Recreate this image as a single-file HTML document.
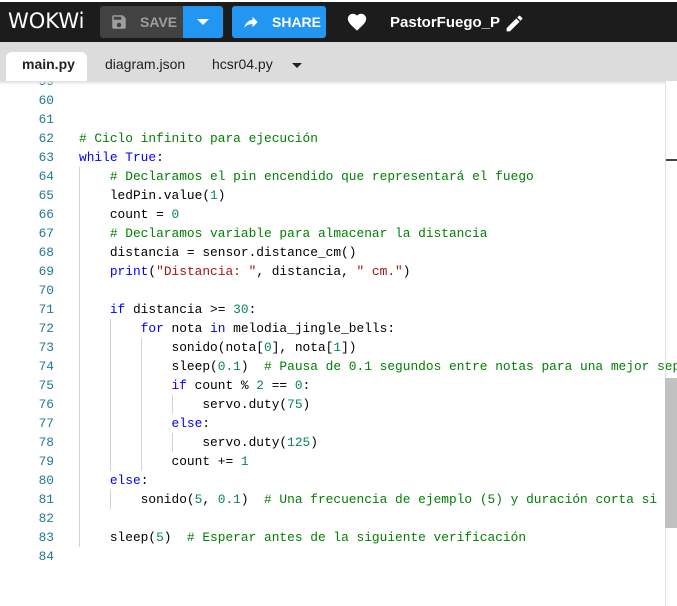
<!DOCTYPE html>
<html><head><meta charset="utf-8"><style>
*{margin:0;padding:0;box-sizing:border-box}
body{width:677px;height:606px;overflow:hidden;background:#fff;font-family:"Liberation Sans",sans-serif;position:relative}
.hdr{position:absolute;left:0;top:2px;width:677px;height:40px;background:#1c1c1c}
.logo{position:absolute;left:8px;top:7px;color:#fff;font-size:21px;letter-spacing:0px;font-family:"DejaVu Sans",sans-serif;font-weight:normal}
.btn{position:absolute;top:4px;height:32px;border-radius:3px;color:#fff;font-weight:bold;font-size:14px;line-height:32px}
.tabs{position:absolute;left:0;top:42px;width:677px;height:39px;background:#dcdcdc}
.tab{position:absolute;top:14px;font-size:14px;color:#222}
.act{position:absolute;left:6px;top:10px;width:81px;height:29px;background:#fff;border-radius:6px 6px 0 0}
.code{position:absolute;left:0;top:81px;width:677px;height:525px;overflow:hidden;font-family:"Liberation Mono",monospace;font-size:12.85px}
.ln{position:absolute;height:19px;line-height:19px;white-space:pre}
.n{position:absolute;left:0;width:54px;text-align:right;color:#237893}
.t{position:absolute;left:79px;color:#000}
.k{color:#0000ff}.c{color:#008000}.m{color:#098658}.s{color:#a31515}
.g{position:absolute;width:1px;background:#d3d3d3}
</style></head><body>
<div class="hdr">
<div class="logo">WOKWi</div>
<div class="btn" style="left:100px;width:83px;background:#424242;border-radius:3px 0 0 3px;color:#9e9e9e">
<svg style="position:absolute;left:10px;top:7px" width="18" height="18" viewBox="0 0 24 24"><path fill="#9e9e9e" d="M17 3H5a2 2 0 0 0-2 2v14a2 2 0 0 0 2 2h14a2 2 0 0 0 2-2V7l-4-4zm-5 16a3 3 0 1 1 0-6 3 3 0 0 1 0 6zm3-10H5V5h10v4z"/></svg>
<span style="position:absolute;left:40px">SAVE</span></div>
<div class="btn" style="left:183px;width:40px;background:#2196f3;border-radius:0 3px 3px 0"><svg style="position:absolute;left:14px;top:13px" width="12" height="6"><path d="M0 0h12L6 6z" fill="#fff"/></svg></div>
<div class="btn" style="left:232px;width:94px;background:#2196f3">
<svg style="position:absolute;left:9px;top:7px" width="20" height="18" viewBox="0 0 24 24"><path fill="#fff" d="M14 5v4C7 10 4 15 3 20c2.5-3.5 6-5.1 11-5.1V19l7-7-7-7z"/></svg>
<span style="position:absolute;left:40px">SHARE</span></div>
<svg style="position:absolute;left:345px;top:9px" width="24" height="22" viewBox="0 0 24 24"><path fill="#fff" d="M12 21.35l-1.45-1.32C5.4 15.36 2 12.28 2 8.5 2 5.42 4.42 3 7.5 3c1.74 0 3.41.81 4.5 2.09C13.09 3.81 14.76 3 16.5 3 19.58 3 22 5.420 22 8.5c0 3.78-3.4 6.86-8.55 11.54L12 21.35z"/></svg>
<div style="position:absolute;left:390px;top:12px;color:#fff;font-weight:bold;font-size:15px">PastorFuego_P</div>
<svg style="position:absolute;left:504px;top:11px" width="21" height="21" viewBox="0 0 24 24"><path fill="#fff" d="M3 17.25V21h3.75L17.81 9.94l-3.75-3.75L3 17.25zM20.71 7.04a1 1 0 0 0 0-1.41l-2.34-2.34a1 1 0 0 0-1.41 0l-1.83 1.83 3.75 3.75 1.83-1.83z"/></svg>
</div>
<div class="tabs">
<div class="act"></div>
<div class="tab" style="left:22px;font-weight:bold">main.py</div>
<div class="tab" style="left:105px">diagram.json</div>
<div class="tab" style="left:212px">hcsr04.py</div>
<svg style="position:absolute;left:292px;top:21px" width="10" height="5"><path d="M0 0h10L5 5z" fill="#222"/></svg>
</div>
<div class="code">
<div class="g" style="left:79px;top:86px;height:380px"></div>
<div class="g" style="left:110px;top:238px;height:152px"></div>
<div class="g" style="left:141px;top:257px;height:133px"></div>
<div class="g" style="left:172px;top:314px;height:19px"></div>
<div class="g" style="left:172px;top:352px;height:19px"></div>
<div class="g" style="left:110px;top:409px;height:19px"></div>
</div>
<div class="code" id="c"></div>
<div style="position:absolute;left:665px;top:81px;width:12px;height:525px;border-left:1px solid #e0e0e0"></div>
<div style="position:absolute;left:666px;top:159px;width:11px;height:2px;background:#444"></div>
<div style="position:absolute;left:665px;top:378px;width:12px;height:150px;background:#c1c1c1"></div>
<div style="position:absolute;left:0;top:81px;width:665px;height:4px;background:linear-gradient(#ddd,rgba(255,255,255,0))"></div>
<script>
var L=[
[59,''],[60,''],[61,''],
[62,'<span class="c"># Ciclo infinito para ejecución</span>'],
[63,'<span class="k">while</span> <span class="k">True</span>:'],
[64,'    <span class="c"># Declaramos el pin encendido que representará el fuego</span>'],
[65,'    ledPin.value(<span class="m">1</span>)'],
[66,'    count = <span class="m">0</span>'],
[67,'    <span class="c"># Declaramos variable para almacenar la distancia</span>'],
[68,'    distancia = sensor.distance_cm()'],
[69,'    <span class="k">print</span>(<span class="s">"Distancia: "</span>, distancia, <span class="s">" cm."</span>)'],
[70,''],
[71,'    <span class="k">if</span> distancia &gt;= <span class="m">30</span>:'],
[72,'        <span class="k">for</span> nota <span class="k">in</span> melodia_jingle_bells:'],
[73,'            sonido(nota[<span class="m">0</span>], nota[<span class="m">1</span>])'],
[74,'            sleep(<span class="m">0.1</span>)  <span class="c"># Pausa de 0.1 segundos entre notas para una mejor separación</span>'],
[75,'            <span class="k">if</span> count % <span class="m">2</span> == <span class="m">0</span>:'],
[76,'                servo.duty(<span class="m">75</span>)'],
[77,'            <span class="k">else</span>:'],
[78,'                servo.duty(<span class="m">125</span>)'],
[79,'            count += <span class="m">1</span>'],
[80,'    <span class="k">else</span>:'],
[81,'        sonido(<span class="m">5</span>, <span class="m">0.1</span>)  <span class="c"># Una frecuencia de ejemplo (5) y duración corta si la distancia</span>'],
[82,''],
[83,'    sleep(<span class="m">5</span>)  <span class="c"># Esperar antes de la siguiente verificación</span>'],
[84,'']];
var h='';L.forEach(function(l){var y=(l[0]-62)*19+48;h+='<div class="ln" style="top:'+y+'px;left:0;width:677px"><span class="n">'+l[0]+'</span><span class="t">'+l[1]+'</span></div>';});
document.getElementById('c').innerHTML=h;
</script>
</body></html>
